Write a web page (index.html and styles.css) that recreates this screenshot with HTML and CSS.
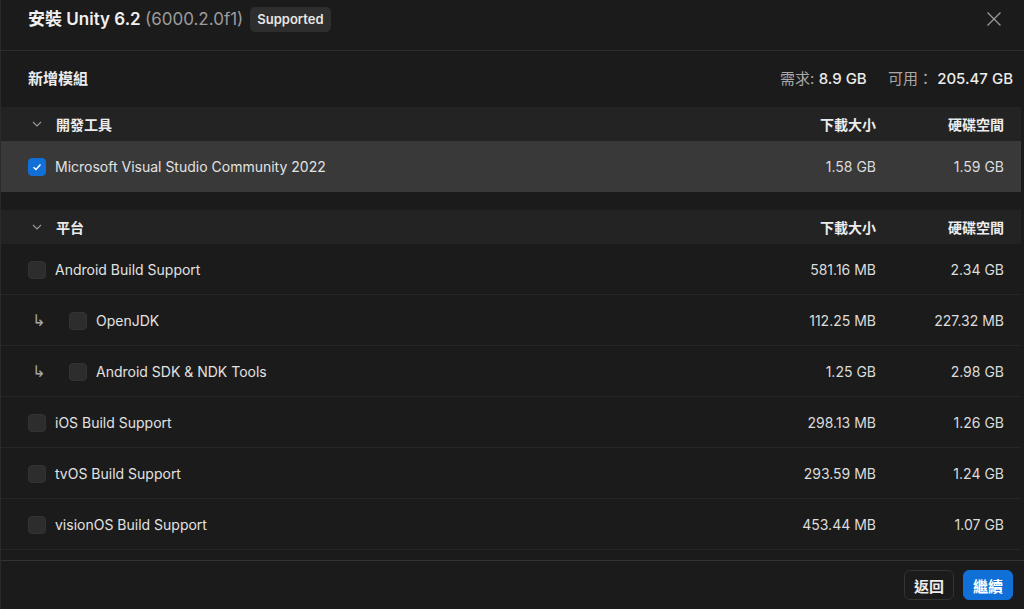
FILE: index.html
```html
<!DOCTYPE html>
<html lang="zh-Hant">
<head>
    <meta charset="UTF-8">
    <meta name="viewport" content="width=device-width, initial-scale=1.0">
    <title>安裝 Unity 6.2</title>
    <link rel="stylesheet" href="styles.css">
</head>
<body>
    <div class="dialog">
        <div class="dialog-header">
            <h1 class="title">安裝 Unity 6.2 <span class="version">(6000.2.0f1)</span></h1>
            <span class="badge">Supported</span>
            <button class="close-btn" aria-label="關閉">
                <svg width="16" height="16" viewBox="0 0 16 16"><path d="M1.5 1.5 L14.5 14.5 M14.5 1.5 L1.5 14.5" stroke="#9a9a9a" stroke-width="1.3" fill="none"/></svg>
            </button>
        </div>

        <div class="subheader">
            <span class="subheader-title">新增模組</span>
            <span class="space-info">
                <span class="label">需求:</span> <span class="value">8.9 GB</span>
                <span class="label gap">可用：</span> <span class="value">205.47 GB</span>
            </span>
        </div>

        <div class="module-list">
            <div class="section">
                <div class="section-header">
                    <span class="chevron"><svg width="12" height="12" viewBox="0 0 12 12"><path d="M2 4 L6 8 L10 4" stroke="#9a9a9a" stroke-width="1.1" fill="none"/></svg></span>
                    <span class="section-name">開發工具</span>
                    <span class="col">下載大小</span>
                    <span class="col">硬碟空間</span>
                </div>
                <div class="row selected">
                    <span class="name"><span class="checkbox checked"><svg width="12" height="12" viewBox="0 0 12 12"><path d="M2.5 6.2 L5 8.5 L9.5 3.5" stroke="#fff" stroke-width="1.5" fill="none"/></svg></span>Microsoft Visual Studio Community 2022</span>
                    <span class="col">1.58 GB</span>
                    <span class="col">1.59 GB</span>
                </div>
            </div>

            <div class="section">
                <div class="section-header">
                    <span class="chevron"><svg width="12" height="12" viewBox="0 0 12 12"><path d="M2 4 L6 8 L10 4" stroke="#9a9a9a" stroke-width="1.1" fill="none"/></svg></span>
                    <span class="section-name">平台</span>
                    <span class="col">下載大小</span>
                    <span class="col">硬碟空間</span>
                </div>
                <div class="row">
                    <span class="name"><span class="checkbox"></span>Android Build Support</span>
                    <span class="col">581.16 MB</span>
                    <span class="col">2.34 GB</span>
                </div>
                <div class="row child">
                    <span class="name"><span class="sub-arrow">↳</span><span class="checkbox"></span>OpenJDK</span>
                    <span class="col">112.25 MB</span>
                    <span class="col">227.32 MB</span>
                </div>
                <div class="row child">
                    <span class="name"><span class="sub-arrow">↳</span><span class="checkbox"></span>Android SDK &amp; NDK Tools</span>
                    <span class="col">1.25 GB</span>
                    <span class="col">2.98 GB</span>
                </div>
                <div class="row">
                    <span class="name"><span class="checkbox"></span>iOS Build Support</span>
                    <span class="col">298.13 MB</span>
                    <span class="col">1.26 GB</span>
                </div>
                <div class="row">
                    <span class="name"><span class="checkbox"></span>tvOS Build Support</span>
                    <span class="col">293.59 MB</span>
                    <span class="col">1.24 GB</span>
                </div>
                <div class="row">
                    <span class="name"><span class="checkbox"></span>visionOS Build Support</span>
                    <span class="col">453.44 MB</span>
                    <span class="col">1.07 GB</span>
                </div>
                <div class="row"></div>
            </div>
        </div>

        <div class="dialog-footer">
            <button class="btn btn-secondary">返回</button>
            <button class="btn btn-primary">繼續</button>
        </div>
    </div>
</body>
</html>
```

FILE: styles.css
```css
body {
    margin: 0;
    background-color: #1b1b1b;
    font-family: Inter, "Noto Sans CJK TC", sans-serif;
    color: #e4e4e4;
}
.dialog {
    height: 609px;
    display: flex;
    flex-direction: column;
    border-left: 1px solid #2a2a2a;
    box-sizing: border-box;
    overflow: hidden;
}

/* Верхняя панель */
.dialog-header {
    height: 51px;
    display: flex;
    align-items: flex-start;
    padding: 7px 22px 0 27px;
    box-sizing: border-box;
    border-bottom: 1px solid #2d2d2d;
    flex-shrink: 0;
}
.title {
    margin: 0;
    font-size: 17px;
    line-height: 25px;
    font-weight: 600;
    color: #f0f0f0;
}
.version {
    font-weight: 400;
    color: #9c9c9c;
}
.badge {
    margin-left: 7px;
    background-color: #2e2e2e;
    color: #e6e6e6;
    font-size: 13px;
    line-height: 15px;
    font-weight: 600;
    padding: 5px 7px;
    border-radius: 5px;
}
.close-btn {
    margin-left: auto;
    margin-top: 4px;
    background: none;
    border: none;
    padding: 0;
    display: flex;
    cursor: pointer;
}

.subheader {
    height: 56px;
    display: flex;
    align-items: center;
    padding: 0 11px 4px 27px;
    box-sizing: border-box;
    flex-shrink: 0;
}
.subheader-title {
    font-size: 15px;
    font-weight: 600;
    color: #ececec;
}
.space-info {
    margin-left: auto;
    font-size: 15px;
}
.space-info .label {
    color: #a8a8a8;
}
.space-info .label.gap {
    margin-left: 17px;
}
.space-info .value {
    color: #ececec;
    font-weight: 500;
}

/* Список модулей */
.module-list {
    flex: 1;
    overflow: hidden;
    margin-right: 3px;
}
.section + .section {
    margin-top: 18px;
}
.section-header, .row {
    display: grid;
    grid-template-columns: 1fr 110px 128px;
    align-items: center;
    padding-right: 17px;
}
.section-header {
    grid-template-columns: 28px 1fr 110px 128px;
    height: 34px;
    background-color: #232323;
    padding-left: 27px;
    font-size: 14px;
    font-weight: 600;
    color: #ececec;
}
.chevron {
    display: flex;
    padding-left: 3px;
}
.col {
    text-align: right;
}
.row {
    height: 51px;
    border-bottom: 1px solid #262626;
    box-sizing: border-box;
    padding-left: 27px;
    padding-top: 1px;
    font-size: 14px;
}
.row .col {
    color: #dcdcdc;
}
.row.selected {
    background-color: #393939;
    border-bottom-color: #393939;
}
.name {
    display: flex;
    align-items: center;
    color: #e2e2e2;
}
.checkbox {
    width: 18px;
    height: 18px;
    border-radius: 4px;
    background-color: #2d2d2d;
    margin-right: 9px;
    display: flex;
    align-items: center;
    justify-content: center;
    box-sizing: border-box;
    border: 1px solid #333;
}
.checkbox.checked {
    background-color: #1070d8;
    border-color: #1070d8;
}
.sub-arrow {
    width: 41px;
    padding-left: 4px;
    box-sizing: border-box;
    color: #a8a8a8;
    font-size: 16px;
    font-family: "DejaVu Sans", sans-serif;
}

/* Нижняя панель */
.dialog-footer {
    height: 48px;
    border-top: 1px solid #333;
    display: flex;
    justify-content: flex-end;
    align-items: center;
    padding-right: 11px;
    gap: 9px;
    flex-shrink: 0;
}
.btn {
    height: 30px;
    padding: 0 9px;
    font-family: inherit;
    font-size: 15px;
    font-weight: 600;
    border-radius: 6px;
    cursor: pointer;
}
.btn-secondary {
    background-color: #1b1b1b;
    border: 1px solid #333;
    color: #ececec;
}
.btn-primary {
    background-color: #1070d8;
    border: 1px solid #1070d8;
    color: #fff;
}
```
